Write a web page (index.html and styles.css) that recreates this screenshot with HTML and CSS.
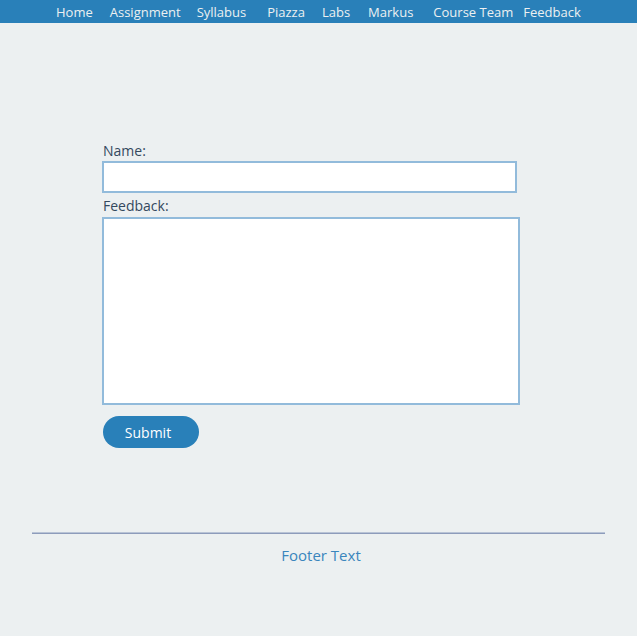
FILE: index.html
```html
<!DOCTYPE html>
<html>
<head>
<meta charset="utf-8">
<link rel="stylesheet" href="styles.css">
</head>
<body>
<nav class="topnav">
  <a href="#">Home</a>
  <a href="#" class="less">Assignment</a>
  <a href="#" class="wide">Syllabus</a>
  <a href="#">Piazza</a>
  <a href="#" class="more">Labs</a>
  <a href="#" class="wide2">Markus</a>
  <a href="#" class="tight">Course Team</a>
  <a href="#">Feedback</a>
</nav>
<main class="page">
  <form class="feedback-form">
    <label class="field-label" for="name">Name:</label>
    <input class="name-input" id="name" type="text">
    <label class="field-label label-gap" for="fb">Feedback:</label>
    <textarea class="fb-input" id="fb"></textarea>
    <button type="button" class="submit-btn">Submit</button>
  </form>
  <footer class="footer">
    <hr class="footer-rule">
    <p class="footer-text">Footer Text</p>
  </footer>
</main>
</body>
</html>
```

FILE: styles.css
```css
html, body {
  margin: 0;
  padding: 0;
  background: #ecf0f1;
  font-family: "Open Sans", "Noto Sans", sans-serif;
  color: #34495e;
}

.topnav {
  box-sizing: border-box;
  height: 23px;
  background: #2980b9;
  display: flex;
  align-items: center;
  padding: 1px 0 0 56px;
  gap: 17px;
}

.topnav a {
  color: #ecf0f1;
  text-decoration: none;
  font-size: 13px;
  line-height: 22px;
}

.topnav a.less {
  margin-right: -1px;
}

.topnav a.wide {
  margin-right: 4px;
}

.topnav a.more {
  margin-right: 1px;
}

.topnav a.wide2 {
  margin-right: 3px;
}

.topnav a.tight {
  margin-right: -7px;
}

.page {
  width: 573px;
  margin: 0 auto;
}

.feedback-form {
  display: flex;
  flex-direction: column;
  align-items: flex-start;
  padding: 118px 0 0 70px;
}

.field-label {
  display: block;
  font-size: 14px;
  line-height: 19px;
  color: #34495e;
  margin-left: 1px;
}

.label-gap {
  margin-top: 3px;
}

.name-input {
  box-sizing: border-box;
  width: 415px;
  height: 32px;
  margin: 1px 0 0 0;
  border: 2px solid #92bbdb;
  background: #fff;
  outline: none;
  padding: 0 6px;
}

.fb-input {
  box-sizing: border-box;
  width: 418px;
  height: 188px;
  margin: 2px 0 0 0;
  border: 2px solid #92bbdb;
  background: #fff;
  resize: none;
  outline: none;
}

.submit-btn {
  margin: 11px 0 0 1px;
  width: 96px;
  height: 32px;
  border: none;
  border-radius: 16px;
  background: #2980b9;
  color: #fff;
  font-family: "Open Sans", "Noto Sans", sans-serif;
  font-size: 14px;
  padding: 0 6px 0 0;
  cursor: pointer;
}

.footer {
  padding-top: 84px;
}

.footer-rule {
  margin: 0;
  border: none;
  border-top: 1px solid #b9c4d6;
  border-bottom: 1px solid #8d9cbb;
  height: 0;
}

.footer-text {
  margin: 11px 0 0 0;
  padding-left: 5px;
  text-align: center;
  color: #3a86bd;
  font-size: 15px;
  line-height: 20px;
}
```
